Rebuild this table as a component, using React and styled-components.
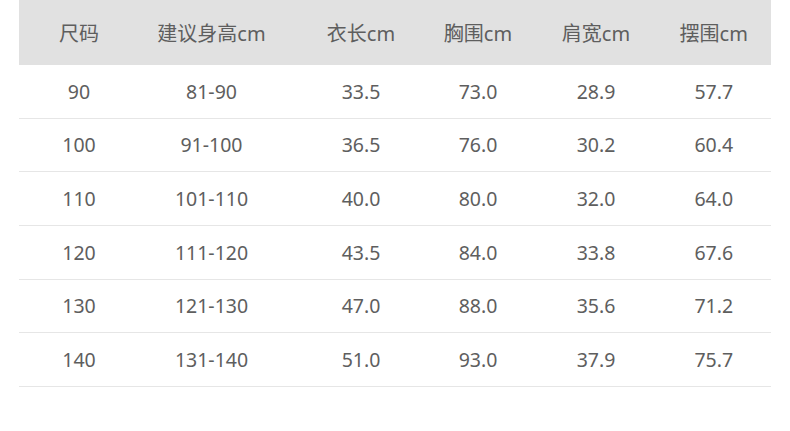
import styled, { createGlobalStyle } from "styled-components";

const GlobalStyle = createGlobalStyle`
  * {
    box-sizing: border-box;
    margin: 0;
    padding: 0;
  }

  body {
    background: #fff;
    font-family: "Noto Sans", "Noto Sans CJK SC", sans-serif;
    color: #5e5e5e;
  }
`;

const headers = ["尺码", "建议身高cm", "衣长cm", "胸围cm", "肩宽cm", "摆围cm"];

const rows = [
  ["90", "81-90", "33.5", "73.0", "28.9", "57.7"],
  ["100", "91-100", "36.5", "76.0", "30.2", "60.4"],
  ["110", "101-110", "40.0", "80.0", "32.0", "64.0"],
  ["120", "111-120", "43.5", "84.0", "33.8", "67.6"],
  ["130", "121-130", "47.0", "88.0", "35.6", "71.2"],
  ["140", "131-140", "51.0", "93.0", "37.9", "75.7"],
];

function App() {
  return (
    <>
      <GlobalStyle />
      <Page>
        <SizeTable>
          <HeadRow>
            {headers.map((h) => (
              <Cell key={h}>{h}</Cell>
            ))}
          </HeadRow>
          {rows.map((r) => (
            <BodyRow key={r[0]}>
              {r.map((v, i) => (
                <Cell key={i}>{v}</Cell>
              ))}
            </BodyRow>
          ))}
        </SizeTable>
      </Page>
    </>
  );
}

const Page = styled.main`
  width: 790px;
  height: 431px;
  padding: 0 19px;
`;

const SizeTable = styled.section`
  width: 752px;
`;

const Row = styled.div`
  display: grid;
  grid-template-columns: 120px 162.5px 119px 115px 121px 1fr;
  align-items: center;
`;

const HeadRow = styled(Row)`
  height: 65px;
  background: #e1e1e1;
  font-size: 20px;
  padding-bottom: 1px;
`;

const BodyRow = styled(Row)`
  height: 53.67px;
  border-bottom: 1px solid #e6e6e6;
  font-size: 19.5px;
`;

const Cell = styled.div`
  text-align: center;
  white-space: nowrap;

  &:nth-child(2) {
    padding-right: 17.5px;
  }
`;

export default App;
